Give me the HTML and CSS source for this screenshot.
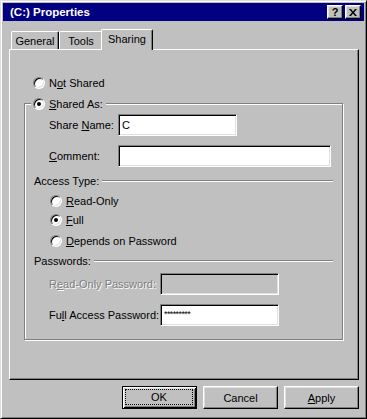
FILE: index.html
```html
<!DOCTYPE html>
<html lang="en">
<head>
    <meta charset="UTF-8">
    <title>(C:) Properties</title>
    <link rel="stylesheet" href="styles.css">
</head>
<body>
    <div class="window">
        <div class="titlebar">
            <span class="title">(C:) Properties</span>
            <div class="title-buttons">
                <span class="tbtn help">?</span>
                <span class="tbtn close">
                    <svg width="8" height="7" viewBox="0 0 8 7">
                        <path d="M0 0h2l2 2.5L6 0h2L5 3.5L8 7H6L4 4.5L2 7H0l3-3.5z" fill="#000"/>
                    </svg>
                </span>
            </div>
        </div>

        <div class="tabs">
            <div class="tab tab-general">General</div>
            <div class="tab tab-tools">Tools</div>
            <div class="tab tab-sharing active">Sharing</div>
        </div>

        <div class="panel">
            <div class="radio-row not-shared">
                <span class="radio"></span>
                <span>N<u>o</u>t Shared</span>
            </div>

            <div class="group">
                <div class="legend">
                    <span class="radio checked"></span>
                    <span><u>S</u>hared As:</span>
                </div>

                <div class="field-row share-row">
                    <span class="label">Share <u>N</u>ame:</span>
                    <span class="edit edit-name">C</span>
                </div>
                <div class="field-row comment-row">
                    <span class="label"><u>C</u>omment:</span>
                    <span class="edit edit-comment"></span>
                </div>

                <div class="section-head access-head">
                    <span>Access Type:</span>
                    <span class="etched-line"></span>
                </div>
                <div class="radio-row option readonly-row">
                    <span class="radio"></span>
                    <span><u>R</u>ead-Only</span>
                </div>
                <div class="radio-row option full-row">
                    <span class="radio checked"></span>
                    <span><u>F</u>ull</span>
                </div>
                <div class="radio-row option depends-row">
                    <span class="radio"></span>
                    <span><u>D</u>epends on Password</span>
                </div>

                <div class="section-head passwords-head">
                    <span>Passwords:</span>
                    <span class="etched-line"></span>
                </div>
                <div class="field-row pw-row ro-pw">
                    <span class="label wide disabled">R<u>e</u>ad-Only Password:</span>
                    <span class="edit edit-pw disabled"></span>
                </div>
                <div class="field-row pw-row full-pw">
                    <span class="label wide">Fu<u>l</u>l Access Password:</span>
                    <span class="edit edit-pw masked">*********</span>
                </div>
            </div>
        </div>

        <div class="buttons">
            <button class="btn default"><span class="focus">OK</span></button>
            <button class="btn">Cancel</button>
            <button class="btn"><span><u>A</u>pply</span></button>
        </div>
    </div>
</body>
</html>
```

FILE: styles.css
```css
body {
    margin: 0;
    background-color: #c0c0c0;
    font-family: "Liberation Sans", Arial, sans-serif;
    font-size: 11px;
    color: #000;
}
u {
    text-underline-offset: 1px;
}
.window {
    width: 367px;
    height: 419px;
    box-sizing: border-box;
    border: 1px solid;
    border-color: #dfdfdf #000 #000 #dfdfdf;
    box-shadow: inset 1px 1px #fff, inset -1px -1px #808080;
    padding: 2px;
    background-color: #c0c0c0;
}
.titlebar {
    height: 18px;
    background-color: #000080;
    color: #fff;
    display: flex;
    align-items: center;
    justify-content: space-between;
    padding: 0 3px 0 7px;
}
.title {
    font-weight: bold;
    font-size: 11.5px;
}
.title-buttons {
    display: flex;
    gap: 2px;
}
.tbtn {
    width: 16px;
    height: 14px;
    box-sizing: border-box;
    background-color: #c0c0c0;
    border: 1px solid;
    border-color: #fff #000 #000 #fff;
    box-shadow: inset -1px -1px #808080, inset 1px 1px #dfdfdf;
    display: flex;
    align-items: center;
    justify-content: center;
    color: #000;
    font-weight: bold;
    font-size: 11px;
    line-height: 1;
}
.tabs {
    display: flex;
    align-items: flex-end;
    height: 20px;
    margin: 8px 0 0 8px;
}
.tab {
    height: 18px;
    box-sizing: border-box;
    border-top: 1px solid #fff;
    border-left: 1px solid #fff;
    border-right: 1px solid #000;
    border-top-left-radius: 2px;
    border-top-right-radius: 2px;
    box-shadow: inset -1px 0 #808080;
    background-color: #c0c0c0;
    display: flex;
    align-items: center;
    justify-content: center;
}
.tab-general {
    width: 48px;
}
.tab-tools {
    width: 44px;
}
.tab.active {
    width: 52px;
    height: 21px;
    margin: 0 0 -1px -2px;
    padding-bottom: 2px;
    z-index: 1;
}
.panel {
    width: 350px;
    height: 331px;
    box-sizing: border-box;
    margin-left: 6px;
    border: 1px solid;
    border-color: #fff #000 #000 #fff;
    box-shadow: inset -1px -1px #808080;
    padding: 26px 0 0 14px;
}
.radio-row {
    display: flex;
    align-items: center;
    height: 13px;
}
.not-shared {
    margin-left: 9px;
}
.radio {
    width: 12px;
    height: 12px;
    box-sizing: border-box;
    border-radius: 50%;
    border: 1px solid;
    border-color: #808080 #fff #fff #808080;
    box-shadow: inset 1px 1px #000, inset -1px -1px #dfdfdf;
    background-color: #fff;
    margin-right: 4px;
    display: flex;
    align-items: center;
    justify-content: center;
    flex-shrink: 0;
}
.radio.checked::after {
    content: "";
    width: 4px;
    height: 4px;
    border-radius: 50%;
    background-color: #000;
}
.group {
    width: 319px;
    height: 237px;
    box-sizing: border-box;
    margin-top: 14px;
    border: 1px solid #808080;
    box-shadow: inset 1px 1px #fff, 1px 1px #fff;
}
.legend {
    display: flex;
    align-items: center;
    width: max-content;
    height: 13px;
    margin: -7px 0 0 6px;
    padding: 0 3px 0 2px;
    background-color: #c0c0c0;
}
.field-row {
    display: flex;
    align-items: center;
    margin-left: 24px;
}
.label {
    width: 69px;
}
.label.wide {
    width: 111px;
}
.disabled {
    color: #808080;
    text-shadow: 1px 1px #fff;
}
.edit {
    height: 22px;
    box-sizing: border-box;
    border: 1px solid;
    border-color: #808080 #fff #fff #808080;
    box-shadow: inset 1px 1px #000, inset -1px -1px #dfdfdf;
    background-color: #fff;
    padding: 0 2px 1px 3px;
    display: flex;
    align-items: center;
}
.edit.disabled {
    background-color: #c0c0c0;
}
.edit-name {
    width: 119px;
}
.edit-comment {
    width: 213px;
}
.edit-pw {
    width: 119px;
}
.masked {
    font-size: 9px;
    letter-spacing: -0.6px;
    padding-bottom: 3px;
}
.share-row {
    margin-top: 4px;
}
.comment-row {
    margin-top: 9px;
}
.section-head {
    display: flex;
    align-items: center;
    height: 13px;
    padding: 0 9px;
}
.etched-line {
    flex: 1;
    height: 0;
    border-top: 1px solid #808080;
    border-bottom: 1px solid #fff;
    margin-left: 3px;
}
.access-head {
    margin-top: 7px;
}
.option {
    margin-left: 25px;
}
.readonly-row {
    margin-top: 7px;
}
.full-row {
    margin-top: 6px;
}
.depends-row {
    margin-top: 8px;
}
.passwords-head {
    margin-top: 7px;
}
.ro-pw {
    margin-top: 6px;
}
.full-pw {
    margin-top: 9px;
}
.buttons {
    width: 350px;
    margin: 6px 0 0 6px;
    display: flex;
    justify-content: flex-end;
    gap: 6px;
}
.btn {
    width: 75px;
    height: 23px;
    box-sizing: border-box;
    border: 1px solid;
    border-color: #fff #000 #000 #fff;
    box-shadow: inset -1px -1px #808080, inset 1px 1px #dfdfdf;
    background-color: #c0c0c0;
    font-family: inherit;
    font-size: 11px;
    color: #000;
    padding: 0;
    display: flex;
    align-items: center;
    justify-content: center;
}
.btn.default {
    border: 1px solid #000;
    box-shadow: inset 1px 1px #fff, inset -1px -1px #000, inset 2px 2px #dfdfdf, inset -2px -2px #808080;
    padding: 2px 3px 3px 2px;
}
.focus {
    flex: 1;
    align-self: stretch;
    border: 1px dotted #000;
    display: flex;
    align-items: center;
    justify-content: center;
}
```
